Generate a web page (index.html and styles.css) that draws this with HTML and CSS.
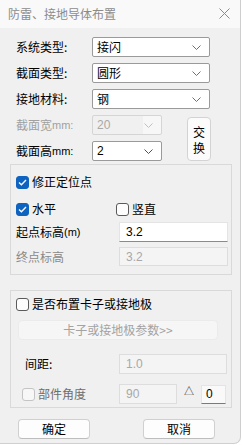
FILE: index.html
```html
<!DOCTYPE html>
<html lang="zh">
<head>
<meta charset="utf-8">
<link rel="stylesheet" href="styles.css">
</head>
<body>
<div class="window">
  <div class="titlebar">
    <span class="title">防雷、接地导体布置</span>
    <svg class="close" width="11" height="11" viewBox="0 0 11 11"><path d="M0.5 0.5L10.5 10.5M10.5 0.5L0.5 10.5" stroke="#8a8a8a" stroke-width="1" fill="none"/></svg>
  </div>

  <div class="topgrid">
    <div class="lbl">系统类型:</div>
    <div class="select wide"><span>接闪</span><svg class="chev" width="9" height="5" viewBox="0 0 9 5"><path d="M0.5 0.5L4.5 4.5L8.5 0.5" stroke="#707070" fill="none"/></svg></div>

    <div class="lbl">截面类型:</div>
    <div class="select wide"><span>圆形</span><svg class="chev" width="9" height="5" viewBox="0 0 9 5"><path d="M0.5 0.5L4.5 4.5L8.5 0.5" stroke="#707070" fill="none"/></svg></div>

    <div class="lbl">接地材料:</div>
    <div class="select wide"><span>钢</span><svg class="chev" width="9" height="5" viewBox="0 0 9 5"><path d="M0.5 0.5L4.5 4.5L8.5 0.5" stroke="#707070" fill="none"/></svg></div>

    <div class="lbl disabled">截面宽<span class="lat">mm:</span></div>
    <div class="select narrow dis"><span>20</span><svg class="chev" width="9" height="5" viewBox="0 0 9 5"><path d="M0.5 0.5L4.5 4.5L8.5 0.5" stroke="#c0c0c0" fill="none"/></svg></div>
    <button class="swap"><span>交</span><span>换</span></button>

    <div class="lbl">截面高<span class="lat">mm:</span></div>
    <div class="select narrow"><span>2</span><svg class="chev" width="9" height="5" viewBox="0 0 9 5"><path d="M0.5 0.5L4.5 4.5L8.5 0.5" stroke="#505050" fill="none"/></svg></div>
  </div>

  <div class="group g1">
    <div class="cbrow r1"><span class="cb on"><svg width="9" height="7" viewBox="0 0 9 7"><path d="M1 3.5L3.4 5.8L8 1" stroke="#fff" stroke-width="1.3" fill="none"/></svg></span><span>修正定位点</span></div>
    <div class="cbrow r2">
      <div class="cbitem"><span class="cb on"><svg width="9" height="7" viewBox="0 0 9 7"><path d="M1 3.5L3.4 5.8L8 1" stroke="#fff" stroke-width="1.3" fill="none"/></svg></span><span>水平</span></div>
      <div class="cbitem vert"><span class="cb"></span><span>竖直</span></div>
    </div>
    <div class="frow r3">
      <div class="flbl">起点标高<span class="lat">(m)</span></div>
      <div class="input active">3.2</div>
    </div>
    <div class="frow r4">
      <div class="flbl">终点标高</div>
      <div class="input dis">3.2</div>
    </div>
  </div>

  <div class="group g2">
    <div class="cbrow r1"><span class="cb"></span><span>是否布置卡子或接地极</span></div>
    <div class="parambtn">卡子或接地极参数&gt;&gt;</div>
    <div class="frow r3b">
      <div class="flbl ind">间距:</div>
      <div class="input dis w108">1.0</div>
    </div>
    <div class="frow r4b">
      <div class="flbl ind2"><span class="cb disc"></span><span class="greytxt">部件角度</span></div>
      <div class="input dis w58">90</div>
      <span class="delta">△</span>
      <div class="input small">0</div>
    </div>
  </div>

  <div class="btnrow">
    <button class="btn">确定</button>
    <button class="btn">取消</button>
  </div>
</div>
</body>
</html>
```

FILE: styles.css
```css
* { box-sizing: border-box; }
html, body {
  margin: 0;
  padding: 0;
  background: #ffffff;
}
body {
  font-family: "Noto Sans CJK SC", "Noto Sans", sans-serif;
  font-size: 12px;
  color: #000;
}
.window {
  width: 241px;
  height: 444px;
  background: #f0f0f0;
  border-right: 1px solid #cfcfcf;
  border-bottom: 1px solid #cfcfcf;
  border-bottom-right-radius: 7px;
  overflow: hidden;
}
.titlebar {
  height: 28px;
  background: #f9f9f9;
  display: flex;
  align-items: center;
  justify-content: space-between;
  padding: 0 10px 0 8px;
}
.title {
  color: #8c8c8c;
  font-size: 12px;
  line-height: 14px;
}
.close { display: block; margin-top: -1px; }

.topgrid {
  margin-top: 9px;
  padding-left: 16px;
  display: grid;
  grid-template-columns: 76px 70px 25px 24px;
  grid-auto-rows: 20px;
  row-gap: 6px;
}
.lbl {
  grid-column: 1;
  display: flex;
  align-items: center;
  line-height: 14px;
  white-space: nowrap;
}
.lat {
  font-family: "Liberation Sans", sans-serif;
  font-size: 11px;
}
.disabled { color: #a0a0a0; }
.select {
  background: #ffffff;
  border: 1px solid #9a9a9a;
  border-radius: 2px;
  display: flex;
  align-items: center;
  justify-content: space-between;
  padding: 0 8px 0 4px;
  line-height: 14px;
}
.select span { font-size: 12px; }
.select.wide { grid-column: 2 / 5; width: 118px; }
.select.narrow { grid-column: 2; width: 70px; }
.select.narrow span { font-family: "Liberation Sans", sans-serif; font-size: 12px; }
.select.dis {
  background: linear-gradient(to right, #f0f0f0 0, #f0f0f0 50px, #f7f7f7 50px);
  border-color: #d5d5d5;
  color: #a8a8a8;
}
.chev { display: block; }
.swap {
  grid-column: 4;
  grid-row: 4 / span 2;
  margin-top: 2px;
  width: 24px;
  height: 44px;
  padding: 0;
  background: #fbfbfb;
  border: 1px solid #d3d3d3;
  border-radius: 4px;
  font-family: "Noto Sans CJK SC", sans-serif;
  font-size: 12px;
  color: #000;
  display: flex;
  flex-direction: column;
  align-items: center;
  justify-content: center;
  gap: 3px;
}
.swap span {
  display: block;
  line-height: 13px;
  height: 13px;
}

.group {
  margin: 0 8px 0 10px;
  border: 1px solid #d9d9d9;
  padding-left: 5px;
}
.g1 {
  margin-top: 3px;
  height: 111px;
  padding-top: 10px;
}
.cbrow {
  display: flex;
  align-items: center;
  height: 14px;
  line-height: 14px;
}
.cbitem { display: flex; align-items: center; }
.cbitem.vert { margin-left: 60px; }
.cb {
  width: 13px;
  height: 13px;
  border-radius: 3px;
  border: 1px solid #5a5a5a;
  background: #fdfdfd;
  margin-right: 3px;
  display: flex;
  align-items: center;
  justify-content: center;
  flex: none;
}
.cb.on {
  background: #0f63c0;
  border-color: #0f63c0;
}
.cb.disc {
  border-color: #c4c4c4;
  background: #f7f7f7;
}
.g1 .r2 { margin-top: 13px; }
.frow {
  display: flex;
  align-items: center;
  height: 20px;
}
.g1 .r3 { margin-top: 6px; }
.g1 .r4 { margin-top: 5px; height: 19px; }
.flbl {
  width: 103px;
  line-height: 14px;
  display: flex;
  align-items: center;
  white-space: nowrap;
}
.g1 .r4 .flbl { color: #8a8a8a; }
.input {
  height: 100%;
  display: flex;
  align-items: center;
  padding-left: 6px;
  font-family: "Liberation Sans", sans-serif;
  font-size: 12px;
}
.g1 .input { width: 109px; }
.input.active {
  background: #ffffff;
  border: 1px solid #e4e4e4;
  border-bottom: 1px solid #8a8a8a;
}
.input.dis {
  background: #f4f4f4;
  border: 1px solid #dddddd;
  color: #a8a8a8;
}

.g2 {
  margin-top: 15px;
  height: 118px;
  padding-top: 6px;
}
.parambtn {
  margin: 9px 0 0 2px;
  width: 200px;
  height: 20px;
  background: #f6f6f6;
  border: 1px solid #ebebeb;
  border-radius: 4px;
  display: flex;
  align-items: center;
  justify-content: center;
  color: #a3a3a3;
  line-height: 14px;
}
.g2 .r3b { margin-top: 14px; }
.g2 .r4b { margin-top: 10px; }
.flbl.ind { padding-left: 9px; }
.flbl.ind2 { padding-left: 6px; }
.greytxt { color: #6e6e6e; }
.input.w108 { width: 108px; }
.input.w58 { width: 58px; }
.delta {
  width: 24px;
  text-align: center;
  font-size: 10px;
  line-height: 10px;
  margin-top: -6px;
  color: #333;
}
.input.small {
  width: 25px;
  height: 19px;
  background: #f9f9f9;
  border: 1px solid #e4e4e4;
  border-bottom: 1px solid #7a7a7a;
  padding-left: 4px;
  color: #000;
}

.btnrow {
  margin-top: 11px;
  padding-left: 18px;
  display: flex;
  gap: 53px;
}
.btn {
  width: 72px;
  height: 20px;
  padding: 0;
  background: #fdfdfd;
  border: 1px solid #d0d0d0;
  border-bottom-color: #bdbdbd;
  border-radius: 4px;
  font-family: "Noto Sans CJK SC", sans-serif;
  font-size: 12px;
  line-height: 14px;
  color: #000;
}
```
